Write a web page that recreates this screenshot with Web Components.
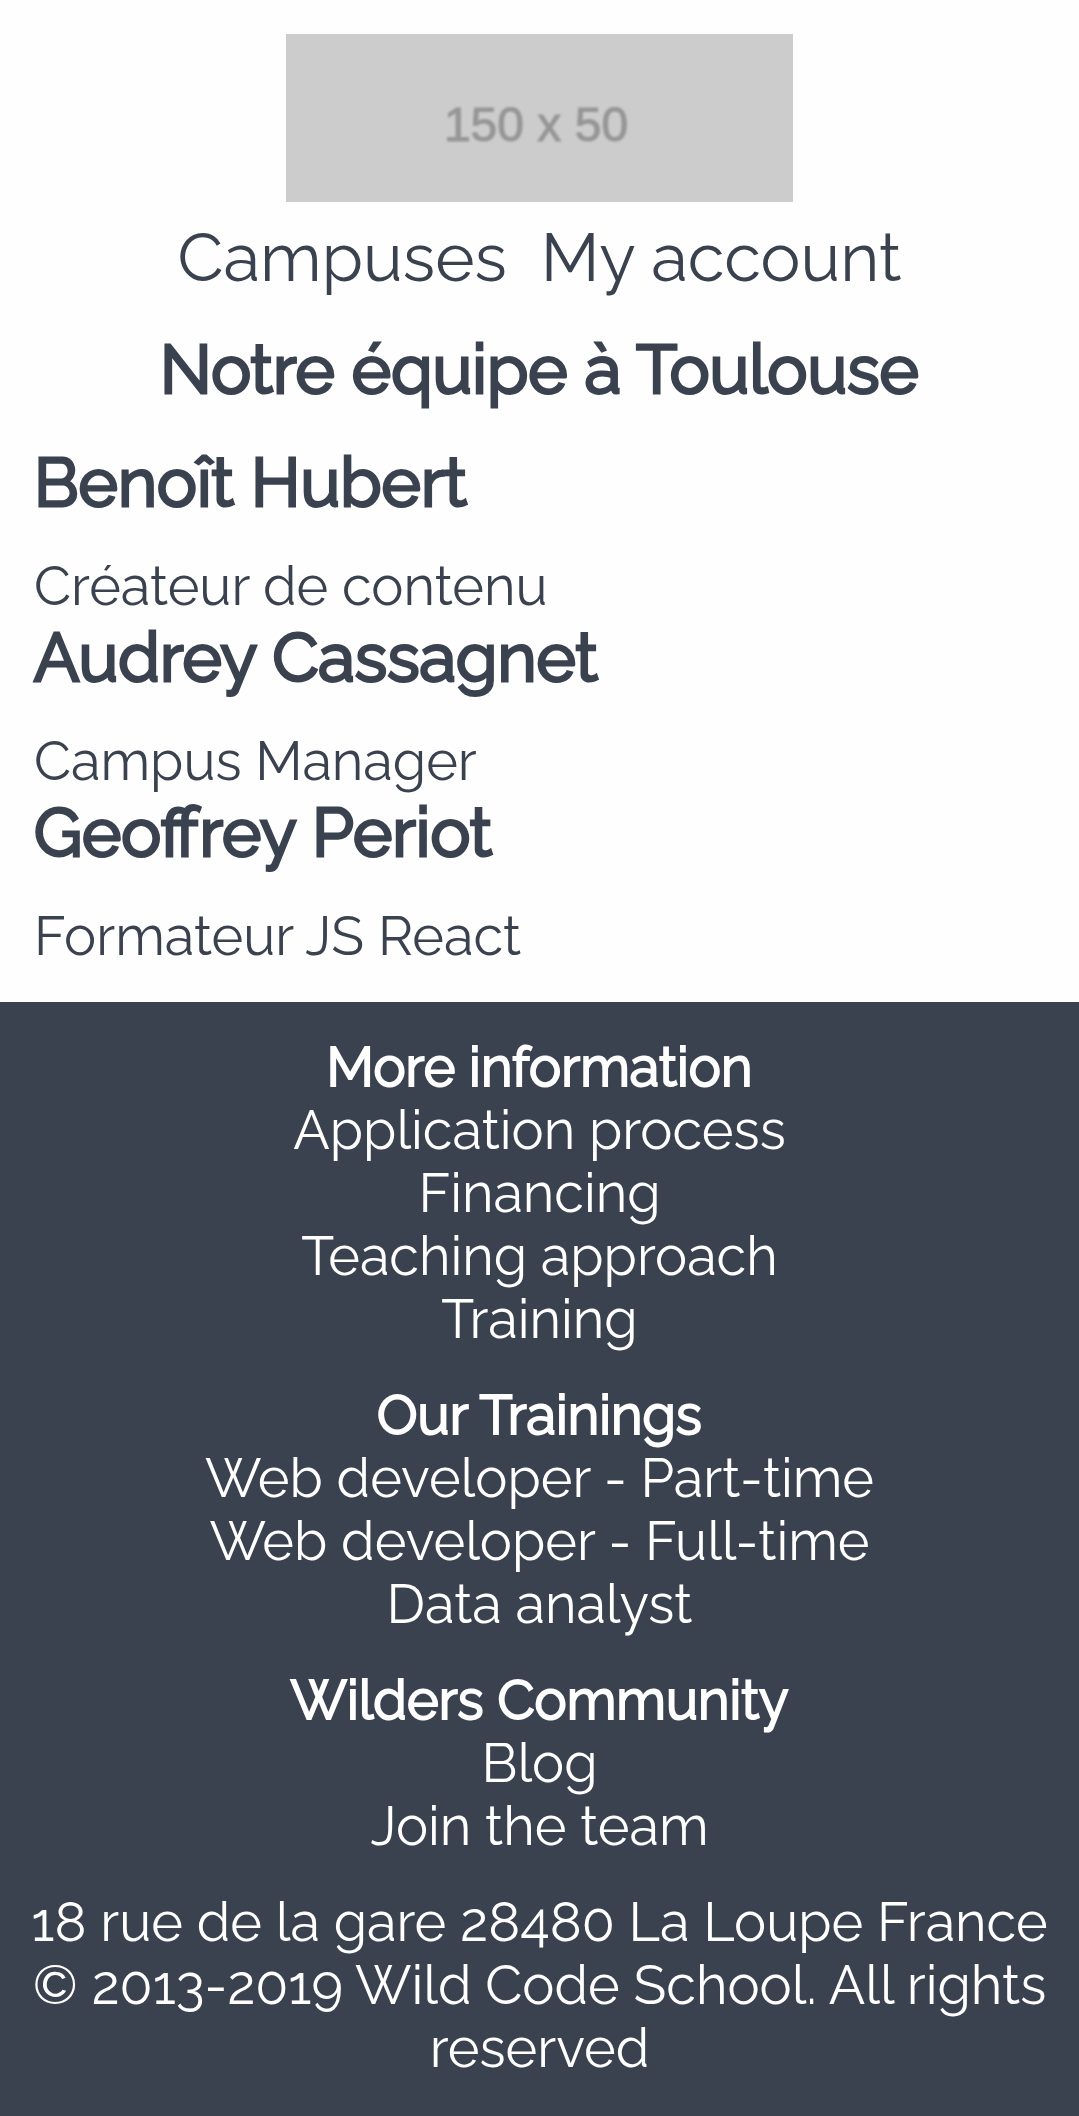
<!DOCTYPE html>
<html lang="fr">
<head>
<meta charset="utf-8">
<meta name="viewport" content="width=device-width, initial-scale=1">
<title>Notre équipe à Toulouse</title>
<style>
  :root {
    --ink: #3b424f;
    --paper: #fefefe;
    --space: 34px;
    --text: 54px;
    --text-line: 63px;
    --title: 67px;
    --title-line: 79px;
  }
  body {
    margin: 0;
    background: var(--paper);
    color: var(--ink);
    font-family: Raleway, Lato, "Open Sans", sans-serif;
    font-size: var(--text);
    line-height: var(--text-line);
    font-weight: 400;
  }
</style>
</head>
<body>
<team-page></team-page>
<script>
  const define = (name, html) => {
    const template = document.createElement('template');
    template.innerHTML = html;
    customElements.define(name, class extends HTMLElement {
      constructor() {
        super();
        this.attachShadow({ mode: 'open' }).append(template.content.cloneNode(true));
      }
    });
  };

  define('placeholder-logo', `
    <style>
      :host { display: block; width: 507px; max-width: 100%; }
      svg { display: block; width: 100%; height: auto; }
      text { font: 400 48px "Liberation Sans Narrow", "Liberation Sans", sans-serif; fill: #969696; stroke: #969696; stroke-width: 1px; filter: blur(1px); }
    </style>
    <svg viewBox="0 0 507 168" role="img" aria-label="150 x 50">
      <rect width="507" height="168" fill="#ccc"/>
      <text x="250" y="107" text-anchor="middle">150 x 50</text>
    </svg>`);

  define('site-header', `
    <style>
      :host { display: flex; flex-direction: column; align-items: center; gap: 16px; }
      nav { display: flex; flex-wrap: wrap; justify-content: center; gap: 0 var(--space);
            font-size: var(--title); line-height: var(--title-line); }
    </style>
    <placeholder-logo></placeholder-logo>
    <nav><slot></slot></nav>`);

  define('nav-link', `
    <style>
      :host { display: block; }
      a { color: inherit; text-decoration: none; }
    </style>
    <a href="#"><slot></slot></a>`);

  define('team-member', `
    <style>
      :host { display: block; }
      h2 { margin: 0 0 33px; font-size: var(--title); line-height: var(--title-line); font-weight: 400; -webkit-text-stroke: 3px; }
      p { margin: 0; }
    </style>
    <h2><slot name="name"></slot></h2>
    <p><slot></slot></p>`);

  define('footer-section', `
    <style>
      :host { display: flex; flex-direction: column; align-items: center; }
      h3 { margin: 0; font-size: inherit; font-weight: 400; -webkit-text-stroke: 2px; }
    </style>
    <h3><slot name="title"></slot></h3>
    <slot></slot>`);

  define('site-footer', `
    <style>
      :host { display: block; background: var(--ink); color: #fff; text-align: center; }
      footer { display: flex; flex-direction: column; gap: 33px; padding: var(--space) 28px 36px; }
      p { margin: 0; }
    </style>
    <footer>
      <footer-section>
        <span slot="title">More information</span>
        <nav-link>Application process</nav-link>
        <nav-link>Financing</nav-link>
        <nav-link>Teaching approach</nav-link>
        <nav-link>Training</nav-link>
      </footer-section>
      <footer-section>
        <span slot="title">Our Trainings</span>
        <nav-link>Web developer - Part-time</nav-link>
        <nav-link>Web developer - Full-time</nav-link>
        <nav-link>Data analyst</nav-link>
      </footer-section>
      <footer-section>
        <span slot="title">Wilders Community</span>
        <nav-link>Blog</nav-link>
        <nav-link>Join the team</nav-link>
      </footer-section>
      <div>
        <p>18 rue de la gare 28480 La Loupe France</p>
        <p>© 2013-2019 Wild Code School. All rights reserved</p>
      </div>
    </footer>`);

  define('team-page', `
    <style>
      :host { display: block; }
      main { display: flex; flex-direction: column; padding: var(--space); }
      h1 { margin: 33px 0 var(--space); font-size: var(--title); line-height: var(--title-line); font-weight: 400; -webkit-text-stroke: 3px; text-align: center; }
    </style>
    <main>
      <site-header>
        <nav-link>Campuses</nav-link>
        <nav-link>My account</nav-link>
      </site-header>
      <h1>Notre équipe à Toulouse</h1>
      <team-member><span slot="name">Benoît Hubert</span>Créateur de contenu</team-member>
      <team-member><span slot="name">Audrey Cassagnet</span>Campus Manager</team-member>
      <team-member><span slot="name">Geoffrey Periot</span>Formateur JS React</team-member>
    </main>
    <site-footer></site-footer>`);
</script>
</body>
</html>
